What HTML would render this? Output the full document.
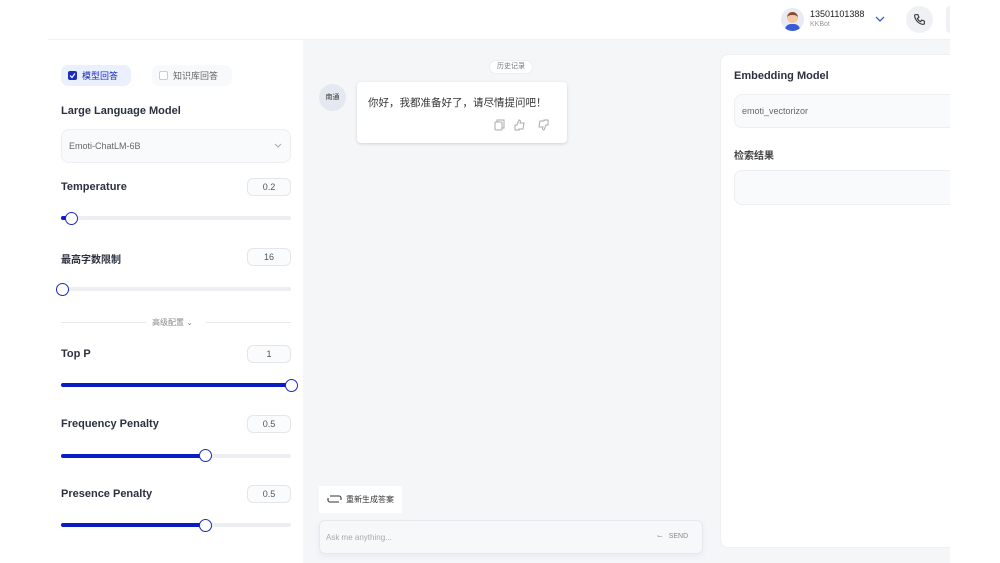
<!DOCTYPE html>
<html><head><meta charset="utf-8"><style>
*{box-sizing:border-box;margin:0;padding:0}
body{width:1000px;height:563px;background:#fff;font-family:"Liberation Sans","Noto Sans CJK SC",sans-serif;position:relative;overflow:hidden;color:#333}
.a{position:absolute}
.lbl{font-size:11px;font-weight:bold;color:#2c3140}
.box{border:1px solid #e4e6ea;border-radius:6px;font-size:9px;color:#555;text-align:center;line-height:16px;background:#fafbfc}
.track{height:4px;background:#eceef2;border-radius:2px}
.fill{height:4px;background:#0a1cc4;border-radius:2px}
.thumb{width:13px;height:13px;border:1.5px solid #1a2bbf;border-radius:50%;background:#fff}
</style></head><body>
<div class="a" style="left:781px;top:8px;width:23px;height:23px;border-radius:50%;background:#e8eaf4;overflow:hidden">
 <div class="a" style="left:6px;top:4px;width:11px;height:11px;border-radius:50%;background:#f2c9a5;border-top:3px solid #8b4a2b"></div>
 <div class="a" style="left:4px;top:16px;width:15px;height:8px;border-radius:6px 6px 0 0;background:#3b5bd6"></div>
</div>
<div class="a" style="left:810px;top:9px;font-size:9px;color:#222">13501101388</div>
<div class="a" style="left:810px;top:21px;font-size:7px;color:#999">KKBot</div>
<svg class="a" style="left:875px;top:15px" width="10" height="8"><path d="M1 2l4 4 4-4" stroke="#3b5bd6" fill="none" stroke-width="1.3"/></svg>
<div class="a" style="left:906px;top:6px;width:27px;height:27px;border-radius:50%;background:#f0f1f4"></div>
<svg class="a" style="left:913px;top:13px" width="13" height="13" viewBox="0 0 24 24"><path d="M5 3h4l2 5-3 2a12 12 0 0 0 6 6l2-3 5 2v4a2 2 0 0 1-2 2A18 18 0 0 1 3 5a2 2 0 0 1 2-2z" fill="none" stroke="#333" stroke-width="2"/></svg>
<div class="a" style="left:48px;top:39px;width:902px;height:1px;background:#f0f1f3"></div>
<div class="a" style="left:303px;top:40px;width:647px;height:523px;background:#f5f6f8"></div>
<div class="a" style="left:61px;top:65px;width:70px;height:21px;border-radius:7px;background:#eaf0fd"></div>
<div class="a" style="left:68px;top:71px;width:9px;height:9px;background:#1a2bbf;border-radius:2px"></div>
<svg class="a" style="left:68px;top:71px" width="9" height="9"><path d="M2 4.5l2 2 3-4" stroke="#fff" fill="none" stroke-width="1.2"/></svg>
<div class="a" style="left:82px;top:69px;font-size:9px;color:#1a2bbf">模型回答</div>
<div class="a" style="left:152px;top:65px;width:80px;height:21px;border-radius:7px;background:#f8f9fb"></div>
<div class="a" style="left:159px;top:71px;width:9px;height:9px;border:1px solid #ccc;border-radius:2px;background:#fff"></div>
<div class="a" style="left:173px;top:69px;font-size:9px;color:#666">知识库回答</div>
<div class="a lbl" style="left:61px;top:105px">Large Language Model</div>
<div class="a" style="left:61px;top:129px;width:230px;height:34px;border:1px solid #eceef1;border-radius:8px;background:#f9fafb"></div>
<div class="a" style="left:69px;top:141px;font-size:9px;color:#666">Emoti-ChatLM-6B</div>
<svg class="a" style="left:274px;top:143px" width="8" height="6"><path d="M1 1l3 3 3-3" stroke="#aaa" fill="none"/></svg>

<div class="a lbl" style="left:61px;top:181px">Temperature</div>
<div class="a box" style="left:247px;top:178px;width:44px;height:18px">0.2</div>
<div class="a track" style="left:61px;top:216px;width:230px"></div>
<div class="a fill" style="left:61px;top:216px;width:10px"></div>
<div class="a thumb" style="left:65px;top:212px"></div>

<div class="a lbl" style="left:61px;top:251px;font-size:10px">最高字数限制</div>
<div class="a box" style="left:247px;top:248px;width:44px;height:18px">16</div>
<div class="a track" style="left:61px;top:287px;width:230px"></div>
<div class="a thumb" style="left:56px;top:283px"></div>

<div class="a" style="left:61px;top:322px;width:85px;height:1px;background:#e6e8eb"></div>
<div class="a" style="left:206px;top:322px;width:85px;height:1px;background:#e6e8eb"></div>
<div class="a" style="left:152px;top:317px;font-size:8px;color:#888">高级配置 ⌄</div>

<div class="a lbl" style="left:61px;top:348px">Top P</div>
<div class="a box" style="left:247px;top:345px;width:44px;height:18px">1</div>
<div class="a fill" style="left:61px;top:383px;width:230px"></div>
<div class="a thumb" style="left:285px;top:379px"></div>

<div class="a lbl" style="left:61px;top:418px">Frequency Penalty</div>
<div class="a box" style="left:247px;top:415px;width:44px;height:18px">0.5</div>
<div class="a track" style="left:61px;top:454px;width:230px"></div>
<div class="a fill" style="left:61px;top:454px;width:144px"></div>
<div class="a thumb" style="left:199px;top:449px"></div>

<div class="a lbl" style="left:61px;top:488px">Presence Penalty</div>
<div class="a box" style="left:247px;top:485px;width:44px;height:18px">0.5</div>
<div class="a track" style="left:61px;top:523px;width:230px"></div>
<div class="a fill" style="left:61px;top:523px;width:144px"></div>
<div class="a thumb" style="left:199px;top:519px"></div>

<div class="a" style="left:489px;top:60px;width:44px;height:14px;border-radius:7px;background:#fff;border:1px solid #eceef1;font-size:7px;color:#777;text-align:center;line-height:12px">历史记录</div>
<div class="a" style="left:319px;top:84px;width:27px;height:27px;border-radius:50%;background:#e4e8f0;font-size:7px;color:#333;text-align:center;line-height:27px">南通</div>
<div class="a" style="left:357px;top:82px;width:210px;height:61px;border-radius:4px;background:#fff;box-shadow:0 1px 3px rgba(0,0,0,.15)"></div>
<div class="a" style="left:368px;top:95px;font-size:10.5px;color:#333">你好，我都准备好了，请尽情提问吧！</div>
<svg class="a" style="left:494px;top:119px" width="62" height="12" viewBox="0 0 62 12" fill="none" stroke="#aaa" stroke-width="1"><rect x="1" y="3" width="7" height="8" rx="1"/><path d="M3 3V1h7v8H8"/><path d="M25 11h-4V6h2l2-5c1 0 2 1 1 3h4l-1 6h-4zM21 6v5"/><path d="M50 1h4v5h-2l-2 5c-1 0-2-1-1-3h-4l1-6h4zM54 6V1"/></svg>

<div class="a" style="left:319px;top:486px;width:83px;height:27px;background:#fff"></div>
<svg class="a" style="left:327px;top:494px" width="15" height="10"><path d="M3 2h9a2 2 0 0 1 2 2v2M12 8H3a2 2 0 0 1-2-2V4" fill="none" stroke="#333" stroke-width="1.1"/></svg>
<div class="a" style="left:346px;top:494px;font-size:8px;color:#333">重新生成答案</div>
<div class="a" style="left:319px;top:520px;width:384px;height:34px;border:1px solid #e6e8ec;border-radius:6px;background:#f7f8fa;box-shadow:0 3px 6px rgba(120,110,220,.08)"></div>
<div class="a" style="left:326px;top:533px;font-size:8px;color:#aaa">Ask me anything...</div>
<div class="a" style="left:657px;top:532px;font-size:7px;color:#888">⌙ &nbsp; SEND</div>

<div class="a" style="left:720px;top:54px;width:250px;height:494px;border-radius:8px;background:#fff;border:1px solid #eef0f2"></div>
<div class="a lbl" style="left:734px;top:70px">Embedding Model</div>
<div class="a" style="left:734px;top:94px;width:236px;height:34px;border:1px solid #eceef1;border-radius:8px;background:#f9fafb"></div>
<div class="a" style="left:742px;top:106px;font-size:9px;color:#666">emoti_vectorizor</div>
<div class="a lbl" style="left:734px;top:147px;color:#444;font-size:10px">检索结果</div>
<div class="a" style="left:734px;top:170px;width:236px;height:35px;border:1px solid #eceef1;border-radius:8px;background:#f9fafb"></div>
<div class="a" style="left:950px;top:0;width:50px;height:563px;background:#fff"></div>
<div class="a" style="left:946px;top:6px;width:4px;height:27px;border-radius:14px 0 0 14px;background:#f0f1f4"></div>
</body></html>
